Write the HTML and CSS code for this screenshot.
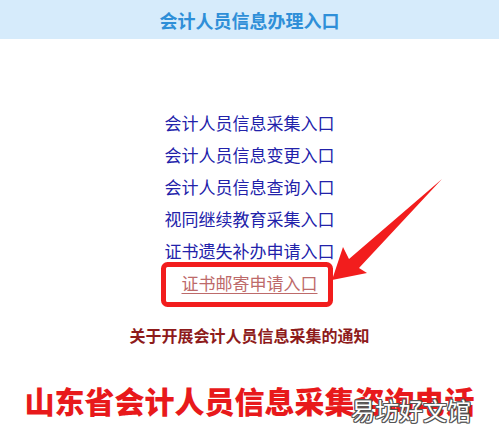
FILE: index.html
```html
<!DOCTYPE html>
<html lang="zh-CN">
<head>
<meta charset="utf-8">
<title>会计人员信息办理入口</title>
<link rel="stylesheet" href="styles.css">
</head>
<body>
<div class="page">
  <header class="bar"><h1 class="bar-title">会计人员信息办理入口</h1></header>
  <ul class="links">
    <li><a class="link" href="#">会计人员信息采集入口</a></li>
    <li><a class="link" href="#">会计人员信息变更入口</a></li>
    <li><a class="link" href="#">会计人员信息查询入口</a></li>
    <li><a class="link" href="#">视同继续教育采集入口</a></li>
    <li><a class="link" href="#">证书遗失补办申请入口</a></li>
    <li><a class="link link-visited" href="#">证书邮寄申请入口</a></li>
  </ul>
  <p class="notice">关于开展会计人员信息采集的通知</p>
  <p class="hotline">山东省会计人员信息采集咨询电话</p>
  <div class="watermark">易坊好文馆</div>
  <svg class="annot" width="499" height="444" viewBox="0 0 499 444">
    <rect x="163.5" y="264.5" width="167" height="40" rx="4" ry="4" fill="none" stroke="#f21d1d" stroke-width="5"/>
    <polygon points="442,179 359,268 367,273 332,280 343,247 349,259" fill="#f21d1d"/>
  </svg>
</div>
</body>
</html>
```

FILE: styles.css
```css
html, body {
  margin: 0;
  padding: 0;
  background: #ffffff;
}
body {
  font-family: "Noto Sans CJK SC", "Microsoft YaHei", sans-serif;
}
.page {
  position: relative;
  width: 499px;
  height: 444px;
  overflow: hidden;
}
.bar {
  height: 39px;
  background: #d6ebfb;
  display: flex;
  align-items: center;
  justify-content: center;
}
.bar-title {
  margin: 0;
  font-size: 18px;
  line-height: 24px;
  font-weight: 700;
  color: #2f8fd8;
}
.links {
  list-style: none;
  margin: 68px 0 0;
  padding: 0;
  text-align: center;
}
.links li {
  line-height: 32px;
  height: 32px;
}
.link {
  font-size: 17px;
  color: #2222aa;
  text-decoration: none;
}
.link-visited {
  color: #bd6a6a;
  text-decoration: underline;
  text-decoration-thickness: 1px;
  text-underline-offset: 3px;
}
.notice {
  margin: 24px 0 0;
  text-align: center;
  font-size: 16px;
  line-height: 24px;
  font-weight: 700;
  color: #8e1b1b;
}
.hotline {
  margin: 35px 0 0;
  text-align: center;
  font-size: 30px;
  line-height: 36px;
  font-weight: 900;
  color: #e8191b;
}
.watermark {
  position: absolute;
  left: 351px;
  top: 394px;
  font-size: 24px;
  line-height: 32px;
  color: #ffffff;
  text-shadow: -1px -1px 0 #555, 1px -1px 0 #555, -1px 1px 0 #555, 1px 1px 0 #555, 0 1px 0 #555, 0 -1px 0 #555, 1px 0 0 #555, -1px 0 0 #555;
}
.annot {
  position: absolute;
  left: 0;
  top: 0;
  pointer-events: none;
}
```
